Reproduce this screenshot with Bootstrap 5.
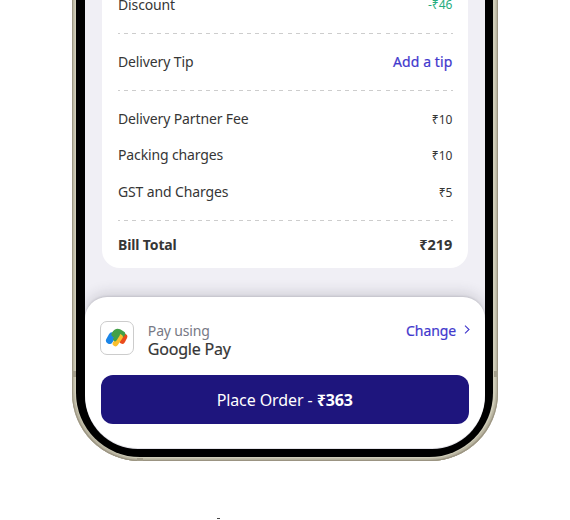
<!DOCTYPE html>
<html lang="en">
<head>
<meta charset="utf-8">
<meta name="viewport" content="width=device-width, initial-scale=1">
<title>Bill summary</title>
<link href="https://cdn.jsdelivr.net/npm/bootstrap@5.3.0/dist/css/bootstrap.min.css" rel="stylesheet">
<script src="https://cdn.jsdelivr.net/npm/bootstrap@5.3.0/dist/js/bootstrap.bundle.min.js" defer></script>
<style>
body{font-family:"Noto Sans",sans-serif;color:#363636;background:#fff;height:520px;overflow:hidden;font-size:14px;line-height:20px}
.phone{width:425.5px;height:461px;margin-left:72px;padding:0 4.5px 4px 4px;border-radius:0 0 68px 68px;background:#d0cdb9;box-shadow:inset 1px -1px 1px #9b9482,inset -1px -1px 1px #9b9482,inset 2.5px -2.5px 0 #bcb8a4,inset -2.5px -2.5px 0 #bcb8a4}
.bezel{height:457px;padding:0 8px 8.5px 8.5px;background:#000;border-radius:0 0 64px 64px}
.screen{height:448.5px;background:#f0eff5;border-radius:0 0 53px 53px;overflow:hidden}
.bill{width:366px;height:268px;margin-left:17.5px;padding:0 15.6px 0 16px;background:#fff;border-radius:0 0 18px 18px}
.bill-row{height:20px;margin-top:18px;letter-spacing:-.13px}
.bill-row .amount{font-size:12px;letter-spacing:0;padding-top:1px}
.first-row{margin-top:-5.5px}
.packing-row{margin-top:16px}
.gst-row{margin-top:17px}
.total-row{margin-top:14px}
.total{font-size:14.5px;letter-spacing:0;line-height:18px;padding-bottom:2px}
.discount{color:#26ac7d}
.dash{height:1px;width:335px;margin-top:18px;background:repeating-linear-gradient(90deg,#cdcdcd 0 2px,transparent 2px 6.17px,#cdcdcd 6.17px 8.17px)}
.first-row + .dash{margin-top:18.5px}
.accent{color:#4238cd}
.tip{letter-spacing:.1px;-webkit-text-stroke:.2px #4238cd}
.change{line-height:19px;letter-spacing:-.1px;margin-right:-1px;-webkit-text-stroke:.2px #4238cd}
.chevron{margin:0 0 2px 8px}
.sheet{height:151.5px;margin-top:28.5px;padding:24px 16px 0;background:#fff;border-radius:22px 22px 53px 53px;box-shadow:0 -4px 14px rgba(40,40,55,.16),0 -1px 2px rgba(40,40,50,.12)}
.pay-logo{width:34px;height:34px;margin:.5px 0 0 -.7px;border:1px solid #ccc;border-radius:7px}
.pay-name{margin-left:14px}
.using{color:#777985;letter-spacing:-.15px;line-height:19px}
.gpay{font-size:16px;letter-spacing:-.2px;line-height:18px;-webkit-text-stroke:.2px #363636}
.order{height:49px;margin-top:16.5px;background:#1e157d!important;border:0;border-radius:12px;font-size:16px;padding:1px 0 0;letter-spacing:-.1px}
.pay-line{height:38px}
.seam{position:absolute;background:#a39e8b}
.seam-left{left:0;top:371px;width:4px;height:6px}
.seam-right{right:0;top:371px;width:4px;height:6px}
.seam-bottom{left:65px;bottom:0;width:6px;height:3px}
.speck{width:3px;height:1px;margin:57px 0 0 217px;background:#444}
</style>
</head>
<body>
<div class="phone position-relative">
  <i class="seam seam-left"></i>
  <i class="seam seam-right"></i>
  <i class="seam seam-bottom"></i>
  <div class="bezel"><div class="screen">
    <div class="bill overflow-hidden">
      <div class="bill-row first-row d-flex justify-content-between align-items-center"><span>Discount</span><span class="amount discount">-₹46</span></div>
      <div class="dash"></div>
      <div class="bill-row d-flex justify-content-between align-items-center"><span>Delivery Tip</span><span class="accent tip">Add a tip</span></div>
      <div class="dash"></div>
      <div class="bill-row d-flex justify-content-between align-items-center"><span>Delivery Partner Fee</span><span class="amount">₹10</span></div>
      <div class="bill-row packing-row d-flex justify-content-between align-items-center"><span>Packing charges</span><span class="amount">₹10</span></div>
      <div class="bill-row gst-row d-flex justify-content-between align-items-center"><span>GST and Charges</span><span class="amount">₹5</span></div>
      <div class="dash"></div>
      <div class="bill-row total-row d-flex justify-content-between align-items-center fw-bold"><span>Bill Total</span><span class="total">₹219</span></div>
    </div>
    <div class="sheet">
      <div class="pay-line d-flex align-items-start">
        <div class="pay-logo d-flex align-items-center justify-content-center">
          <svg width="24" height="22" viewBox="0 0 24 22" fill="none" stroke-linecap="round" stroke-linejoin="round">
            <path d="M4.5 13.4 7 9" stroke="#1a85e8" stroke-width="7"/>
            <path d="M17.3 13.8 19.3 9.6" stroke="#ea4b1c" stroke-width="6"/>
            <path d="M9.5 7.3Q11.5 4 14 5L17.2 7" stroke="#43a047" stroke-width="6"/>
            <path d="M10.5 16.5 15 10" stroke="#fbbf2d" stroke-width="5.6"/>
            <path d="M10 12.3 13 7.5" stroke="#43a047" stroke-width="4"/>
          </svg>
        </div>
        <div class="pay-name flex-grow-1"><div class="using">Pay using</div><div class="gpay">Google Pay</div></div>
        <div class="accent change d-flex align-items-center">Change<svg class="chevron" width="6" height="9" viewBox="0 0 6 9" fill="none" stroke="#4238cd" stroke-width="1.1"><path d="m1 .7 4 3.8-4 3.8"/></svg></div>
      </div>
      <button class="btn btn-primary order w-100 d-block">Place Order - <b>₹363</b></button>
    </div>
  </div></div>
</div>
<div class="speck"></div>
</body>
</html>
